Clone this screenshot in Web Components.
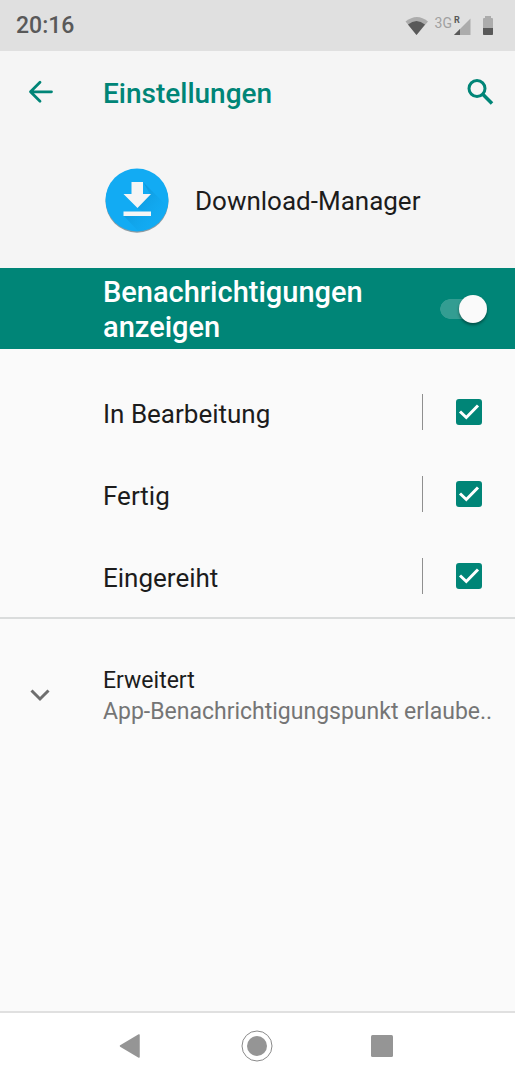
<!DOCTYPE html>
<html lang="de">
<head>
<meta charset="utf-8">
<meta name="viewport" content="width=device-width, initial-scale=1">
<title>Einstellungen</title>
<style>
  body { margin: 0; font-family: Roboto, "Noto Sans", sans-serif; color: #1c1c1c; background: #fafafa; }
</style>
</head>
<body>
<settings-screen></settings-screen>

<template id="status-bar">
  <style>
    :host { display: flex; align-items: center; justify-content: space-between; height: 51px; padding: 0 16px; background: #e0e0e0; color: #595959; }
    time { font-size: 23px; font-weight: 500; line-height: 28px; }
    .icons { display: flex; align-items: center; }
    .net { align-self: flex-start; font-size: 14px; line-height: 14px; font-weight: 400; color: #a0a0a0; margin-left: 6px; }
    .signal { display: grid; width: 17px; height: 20px; margin-left: 2px; }
    .signal > * { grid-area: 1 / 1; }
    .signal span { font-size: 9px; line-height: 9px; font-weight: 700; }
    .battery { margin: 0 5px 0 11px; }
    svg { display: block; }
  </style>
  <time>20:16</time>
  <div class="icons">
    <svg width="24" height="20" viewBox="0 0 24 20" aria-label="WLAN"><path d="M0.500 5.500Q12-3.500 23 5.500L11.500 19Z" fill="#acacac"/><path d="M3 8.500Q11.500 1.500 20 8.500L11.500 19Z" fill="#595959"/></svg>
    <span class="net">3G</span>
    <span class="signal">
      <svg width="17" height="20" viewBox="0 0 17 20"><path d="M16.500 2.500V19H0Z" fill="#acacac"/><path d="M6 13V19H0Z" fill="#595959"/></svg>
      <span>R</span>
    </span>
    <svg class="battery" width="12" height="20" viewBox="0 0 12 20" aria-label="Akku"><path d="M3 0H9V2H10Q11 2 11 3V18Q11 19 10 19H2Q1 19 1 18V3Q1 2 2 2H3Z" fill="#acacac"/><path d="M1 12H11V18Q11 19 10 19H2Q1 19 1 18Z" fill="#595959"/></svg>
  </div>
</template>

<template id="app-toolbar">
  <style>
    :host { display: flex; align-items: center; height: 81px; padding: 0 20px 0 24px; background: #f5f5f5; color: #008577; }
    button { display: grid; place-items: center; width: 32px; height: 32px; padding: 0; border: 0; background: none; color: inherit; cursor: pointer; }
    h1 { flex: 1; margin: 4px 0 0 47px; font-size: 28px; line-height: 36px; font-weight: 500; }
    svg { display: block; fill: none; stroke: currentColor; stroke-width: 3; }
  </style>
  <button type="button" aria-label="Zurück"><svg width="32" height="32" viewBox="0 0 32 32"><path d="M16 6.300L6.500 15.800L16 25.300M6.500 15.800H27.500" stroke-linecap="round" stroke-linejoin="round" stroke-width="2.800"/></svg></button>
  <h1><slot></slot></h1>
  <button type="button" aria-label="Suchen"><svg width="32" height="32" viewBox="0 0 32 32"><circle cx="14" cy="12.500" r="8"/><path d="M19.800 18.200L29 27.500" stroke-width="3.500"/></svg></button>
</template>

<template id="app-header">
  <style>
    :host { display: flex; align-items: center; gap: 24px; height: 136px; padding: 0 24px 0 103px; background: #f5f5f5; }
    h2 { margin: 2px 0 0; font-size: 26px; line-height: 32px; font-weight: 400; }
    svg { display: block; flex: none; }
  </style>
  <svg width="68" height="68" viewBox="0 0 68 68" aria-hidden="true">
    <defs><clipPath id="disc"><circle cx="34" cy="34" r="31.500"/></clipPath>
    <linearGradient id="fade" x1="0" y1="0" x2="1" y2="1"><stop offset="0.300" stop-color="#0b8fd0" stop-opacity=".6"/><stop offset="0.850" stop-color="#12a8f0" stop-opacity="0"/></linearGradient></defs>
    <circle cx="34" cy="35.200" r="31.500" fill="#8c9ba3"/>
    <circle cx="34" cy="34" r="31.500" fill="#12abf3"/>
    <path clip-path="url(#disc)" fill="url(#fade)" d="M40 16L62 38V66H36L21 50H48L34 42L47 28Z"/>
    <path fill="#f5f5f5" d="M28.500 16H40V28H48L34.500 42L20.500 28H28.500ZM20.500 45.500H48V50H20.500Z"/>
  </svg>
  <h2><slot></slot></h2>
</template>

<template id="master-switch">
  <style>
    :host { display: block; background: #008577; color: #fff; }
    label { display: flex; align-items: center; justify-content: space-between; gap: 24px; padding: 5px 28px 4px 103px; cursor: pointer; }
    .text { max-width: 300px; margin-top: 2px; font-size: 29px; line-height: 35px; font-weight: 500; }
    input { appearance: none; flex: none; display: flex; align-items: center; width: 47px; height: 30px; margin: 0; cursor: pointer;
      background: linear-gradient(#339d92, #339d92) 10px 50% / 28px 20px no-repeat, radial-gradient(circle at 10px 50%, #339d92 9.500px, transparent 10px); }
    input::before { content: ""; width: 28px; height: 28px; border-radius: 50%; background: #fafafa; box-shadow: 0 2px 3px #0006; }
    input:checked::before { margin-left: auto; }
  </style>
  <label><span class="text"><slot></slot></span><input type="checkbox" role="switch" checked></label>
</template>

<template id="channel-row">
  <style>
    :host { display: flex; align-items: center; height: 82px; padding: 0 33px 0 103px; }
    label { flex: 1; margin-top: 4px; font-size: 26px; line-height: 32px; }
    .box { display: grid; align-items: center; height: 36px; padding-left: 33px; border-left: 1px solid #8f8f8f; }
    .box > * { grid-area: 1 / 1; }
    input { appearance: none; width: 26px; height: 26px; margin: 0; border: 2px solid #757575; border-radius: 3px; }
    input:checked { background: #008577; border-color: #008577; }
    svg { display: none; z-index: 1; pointer-events: none; fill: none; stroke: #fff; stroke-width: 3; }
    input:checked + svg { display: block; }
  </style>
  <label for="check"><slot></slot></label>
  <div class="box"><input id="check" type="checkbox" checked><svg width="26" height="26" viewBox="0 0 26 26"><path d="M4 12.500L10.300 18.500L22 6.500"/></svg></div>
</template>

<template id="advanced-row">
  <style>
    :host { display: block; margin-top: 22px; }
    button { display: flex; align-items: center; gap: 47px; width: 100%; padding: 22px 16px 22px 24px; border: 0; background: none; font: inherit; color: inherit; text-align: left; cursor: pointer; }
    svg { flex: none; fill: none; stroke: #6e6e6e; stroke-width: 3; }
    .text { display: grid; margin-top: 2px; font-size: 23px; line-height: 31px; white-space: nowrap; }
    .sub { color: #757575; }
  </style>
  <button type="button" aria-expanded="false">
    <svg width="32" height="32" viewBox="0 0 32 32"><path d="M7.500 11.500L16 20L24.500 11.500"/></svg>
    <span class="text"><slot></slot><span class="sub"><slot name="summary"></slot></span></span>
  </button>
</template>

<template id="nav-bar">
  <style>
    :host { display: grid; grid-template-columns: repeat(3, 1fr); height: 65px; padding: 0 70px 2px 69px; border-top: 2px solid #e0e0e0; background: #fff; }
    button { display: grid; place-items: center; padding: 0; border: 0; background: none; cursor: pointer; }
    svg { display: block; fill: #959595; }
  </style>
  <button type="button" aria-label="Zurück"><svg width="34" height="34" viewBox="0 0 34 34"><path d="M24 6V28L5.500 17Z" stroke="#959595" stroke-width="1.500" stroke-linejoin="round"/></svg></button>
  <button type="button" aria-label="Startbildschirm"><svg width="34" height="34" viewBox="0 0 34 34"><circle cx="17" cy="17" r="15" fill="none" stroke="#8a8a8a"/><circle cx="17" cy="17" r="10"/></svg></button>
  <button type="button" aria-label="Letzte Apps"><svg width="34" height="34" viewBox="0 0 34 34"><rect x="6" y="6" width="22" height="22" rx="1.500"/></svg></button>
</template>

<template id="settings-screen">
  <style>
    :host { display: flex; flex-direction: column; min-height: 100vh; }
    main { flex: 1; }
    .channels { padding-top: 22px; border-bottom: 2px solid #dadcdc; }
  </style>
  <status-bar></status-bar>
  <app-toolbar>Einstellungen</app-toolbar>
  <main>
    <app-header>Download-Manager</app-header>
    <master-switch>Benachrichtigungen anzeigen</master-switch>
    <div class="channels">
      <channel-row>In Bearbeitung</channel-row>
      <channel-row>Fertig</channel-row>
      <channel-row>Eingereiht</channel-row>
    </div>
    <advanced-row>Erweitert<span slot="summary">App-Benachrichtigungspunkt erlaube..</span></advanced-row>
  </main>
  <nav-bar></nav-bar>
</template>

<script>
  class TemplateElement extends HTMLElement {
    constructor() {
      super();
      const template = document.getElementById(this.localName);
      this.attachShadow({ mode: "open" }).append(template.content.cloneNode(true));
    }
  }
  for (const name of ["status-bar", "app-toolbar", "app-header", "master-switch", "channel-row", "advanced-row", "nav-bar", "settings-screen"]) {
    customElements.define(name, class extends TemplateElement {});
  }
</script>
</body>
</html>
